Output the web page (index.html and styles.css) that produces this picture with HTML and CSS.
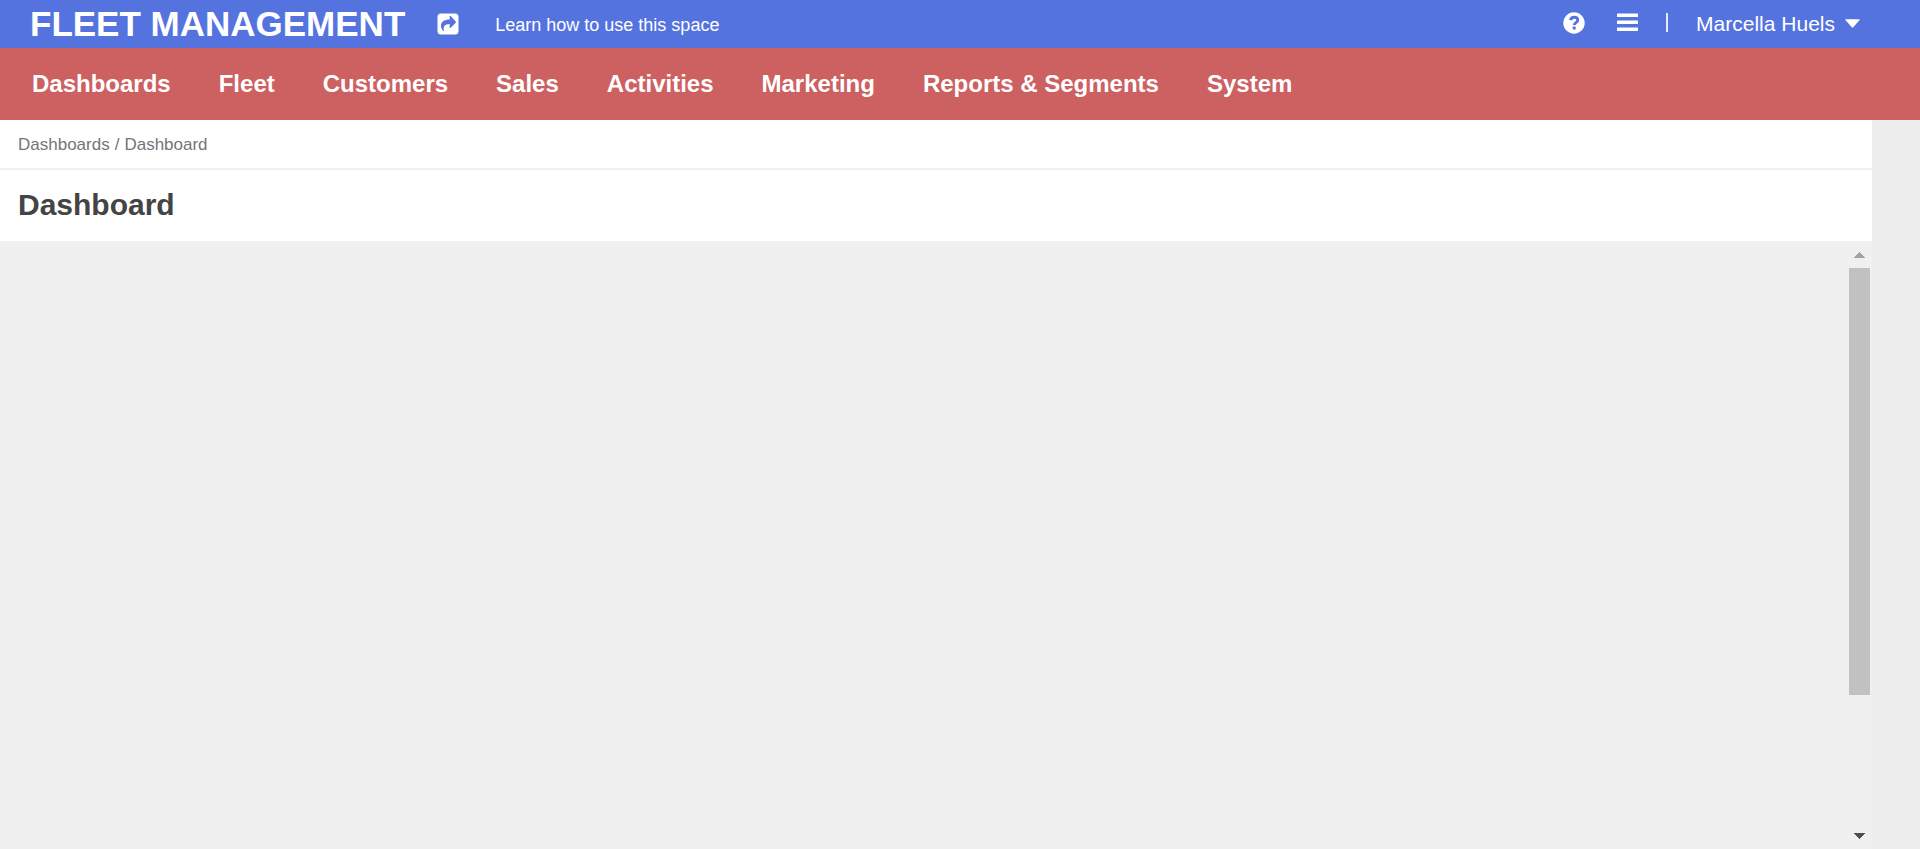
FILE: index.html
```html
<!DOCTYPE html>
<html lang="en">
<head>
<meta charset="utf-8">
<meta name="viewport" content="width=device-width, initial-scale=1">
<title>Fleet Management</title>
<link rel="stylesheet" href="styles.css">
</head>
<body>
<header class="topbar">
  <a class="brand" href="#">FLEET MANAGEMENT</a>
  <a class="learn" href="#">
    <svg class="icon-share" viewBox="0 0 22 22" aria-hidden="true"><path fill="#fff" fill-rule="evenodd" d="M4 .5h14A3.500 3.500 0 0 1 21.500 4v14a3.500 3.500 0 0 1-3.500 3.500H4A3.500 3.500 0 0 1 .5 18V4A3.500 3.500 0 0 1 4 .5zM12.700 3.200v3.300C7.400 6.600 4 8.500 4 13c0 2 1.100 3.900 2.200 4.900.4.400.9 0 .7-.5C5.900 13.300 8 11.200 12.700 11.100v3.300c0 .6.600.8 1 .4l5-5c.4-.4.4-.9 0-1.300l-5-5.600c-.4-.4-1-.2-1 .3z"/></svg>
    <span class="learn-text">Learn how to use this space</span>
  </a>
  <div class="tools">
    <button class="tool" type="button" aria-label="Help">
      <svg class="icon-help" viewBox="0 0 22 22" aria-hidden="true"><circle cx="11" cy="11" r="10.700" fill="#fff"/><path d="M7.500 8.200C8 6.200 9.300 5.300 11.200 5.300c2 0 3.500 1.100 3.500 2.900 0 2.500-3.400 2.300-3.400 4.900" fill="none" stroke="#5473df" stroke-width="2.900"/><circle cx="11.200" cy="16" r="1.700" fill="#5473df"/></svg>
    </button>
    <button class="tool" type="button" aria-label="Menu">
      <svg class="icon-menu" viewBox="0 0 21 19" aria-hidden="true"><path fill="#fff" d="M.5.500h20q.5 0 .5.500v2.500q0 .5-.5.500H.5Q0 4 0 3.500V1Q0 .5.5.500zM.5 7.500h20q.5 0 .5.500v2.500q0 .5-.5.500H.5q-.5 0-.5-.5V8q0-.5.5-.5zM.5 14.500h20q.5 0 .5.500v2.500q0 .5-.5.500H.5q-.5 0-.5-.5V15q0-.5.5-.5z"/></svg>
    </button>
    <span class="divider"></span>
    <button class="user" type="button">Marcella Huels
      <svg class="icon-caret" viewBox="0 0 15 9" aria-hidden="true"><path fill="#fff" d="M.8.300h13.400q1 0 .4.800L8.200 8.200q-.7.600-1.400 0L.4 1.100Q-.2.300.8.300z"/></svg>
    </button>
  </div>
</header>
<nav class="mainnav">
  <a href="#">Dashboards</a>
  <a href="#">Fleet</a>
  <a href="#">Customers</a>
  <a href="#">Sales</a>
  <a href="#">Activities</a>
  <a href="#">Marketing</a>
  <a href="#">Reports &amp; Segments</a>
  <a href="#">System</a>
</nav>
<main class="page">
  <nav class="crumbs" aria-label="Breadcrumb">
    <a href="#">Dashboards</a><span>/</span><a href="#">Dashboard</a>
  </nav>
  <h1 class="title">Dashboard</h1>
  <section class="content">
    <div class="scrollbar">
      <button class="step" type="button" aria-label="Scroll up"><svg class="icon-step" viewBox="0 0 11 6" shape-rendering="crispEdges" aria-hidden="true"><path fill="#a3a3a3" d="M5.500 0L11 6H0z"/></svg></button>
      <div class="track"><div class="thumb"></div></div>
      <button class="step" type="button" aria-label="Scroll down"><svg class="icon-step" viewBox="0 0 11 6" shape-rendering="crispEdges" aria-hidden="true"><path fill="#505050" d="M0 0h11L5.500 6z"/></svg></button>
    </div>
  </section>
</main>
</body>
</html>
```
FILE: styles.css
```css
* { box-sizing: border-box; }

body {
  margin: 0;
  min-height: 100vh;
  display: flex;
  flex-direction: column;
  background: #ededed;
  font-family: "Liberation Sans", Arial, sans-serif;
}

a { color: inherit; text-decoration: none; }

button {
  padding: 0;
  border: 0;
  background: none;
  color: inherit;
  font: inherit;
}

svg { display: block; }

.topbar {
  display: flex;
  align-items: center;
  height: 48px;
  padding: 0 60px 0 30px;
  background: #5473df;
  color: #fff;
}

.brand {
  padding-bottom: 1px;
  font-size: 35px;
  font-weight: bold;
  line-height: 40px;
}

.learn {
  display: flex;
  align-items: center;
  gap: 36px;
  margin-left: 32px;
  font-size: 18px;
}

.learn-text { padding-top: 2px; }

.icon-share { width: 22px; height: 22px; }

.tools {
  display: flex;
  align-items: center;
  margin-left: auto;
  padding-bottom: 3px;
}

.tool { margin-right: 32px; }
.icon-help { width: 22px; height: 22px; }
.icon-menu { width: 21px; height: 19px; }

.divider {
  width: 2px;
  height: 19px;
  margin: 0 28px 0 -4px;
  background: #e6eaf8;
}

.user {
  display: flex;
  align-items: center;
  gap: 10px;
  padding-top: 2px;
  font-size: 21px;
}

.icon-caret { width: 15px; height: 9px; }

.mainnav {
  display: flex;
  align-items: center;
  gap: 48px;
  height: 72px;
  padding: 0 32px;
  background: #cd6061;
  color: #fff;
  font-size: 24px;
  font-weight: bold;
}

.page {
  flex: 1;
  display: flex;
  flex-direction: column;
  margin-right: 48px;
  background: #fff;
}

.crumbs {
  display: flex;
  align-items: center;
  gap: 5px;
  height: 50px;
  padding: 2px 18px 0;
  border-bottom: 2px solid #f0f0f0;
  color: #757575;
  font-size: 17px;
}

.title {
  margin: 0;
  padding: 0 18px 2px;
  color: #444;
  font-size: 30px;
  line-height: 69px;
}

.content {
  flex: 1;
  display: flex;
  justify-content: flex-end;
  padding-right: 2px;
  background: #f0f0f0;
}

.scrollbar {
  display: flex;
  flex-direction: column;
  width: 21px;
}

.step {
  display: flex;
  align-items: center;
  justify-content: center;
  height: 27px;
}

.icon-step { width: 11px; height: 6px; }

.track { flex: 1; display: flex; }

.thumb {
  width: 100%;
  height: 77%;
  background: #c1c1c1;
}
```
